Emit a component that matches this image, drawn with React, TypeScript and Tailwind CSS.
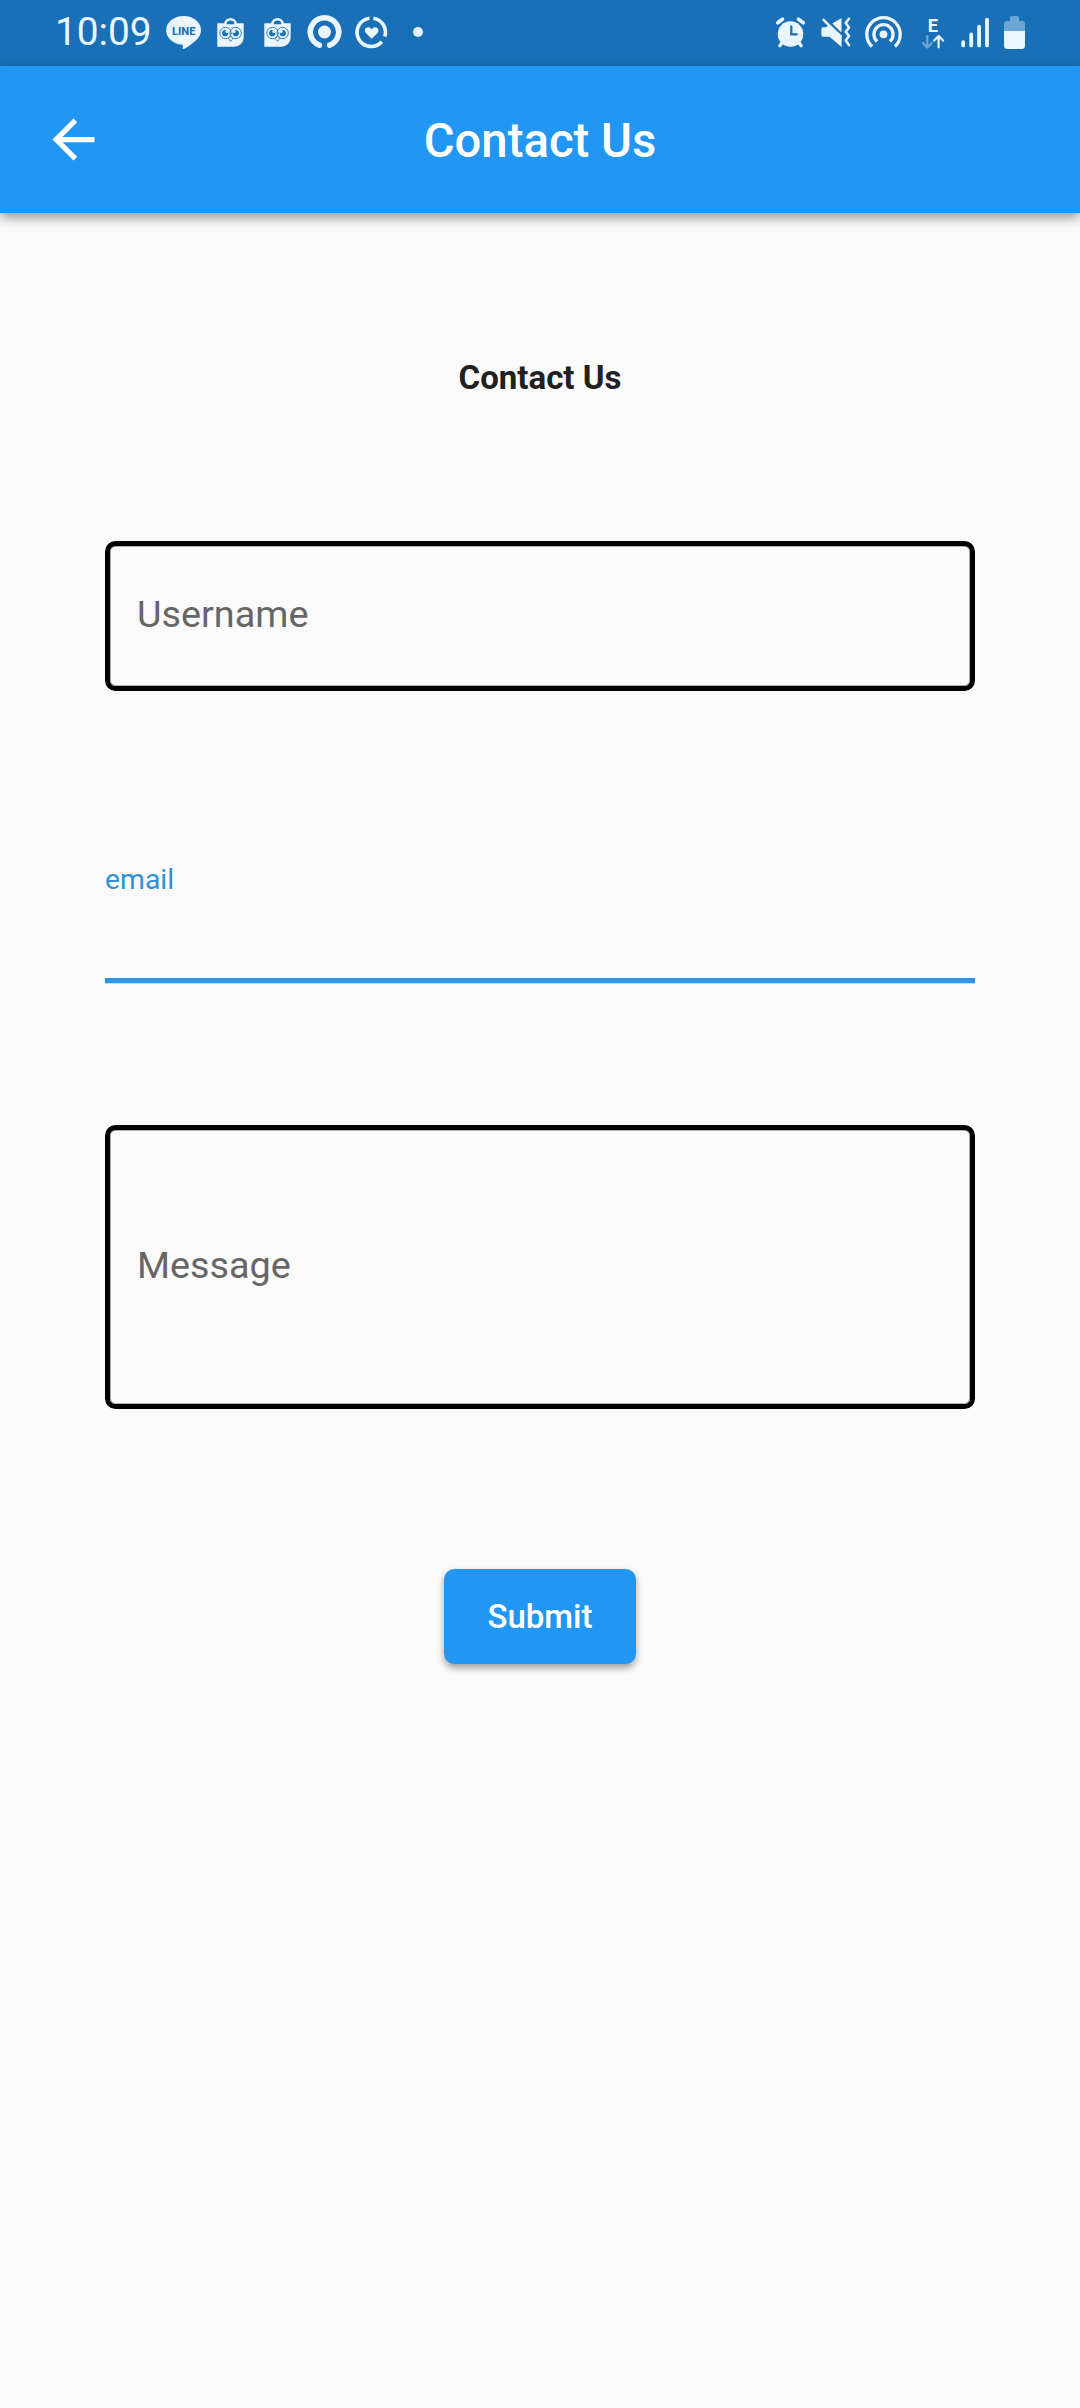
import React from 'react';

const INK = '#eaf5ff';
const BAR = '#1a70b7';

/* Every status glyph is drawn in status-bar units: x is its offset along the bar. */
function Glyph({ x, w, className, children }: { x: number; w: number; className?: string; children: React.ReactNode }) {
  return (
    <svg
      className={className ? 'block shrink-0 ' + className : 'block shrink-0'}
      width={w}
      height={66}
      viewBox={`${x} 0 ${w} 66`}
      fill={INK}
    >
      {children}
    </svg>
  );
}

function OwlBag() {
  return (
    <>
      <path d="M217.3 23.300h26.400v13.900a9.500 9.500 0 0 1-9.500 9.500h-16.900z" />
      <path d="M226.600 24.200a3.900 3.900 0 0 1 7.800 0z" fill={BAR} />
      <path d="M225.300 24a5.200 4.700 0 0 1 10.400 0" fill="none" stroke={INK} strokeWidth="2.500" />
      <g fill="none" stroke={BAR} strokeWidth="0.900">
        <circle cx="225.500" cy="33" r="5.700" />
        <circle cx="235.600" cy="33" r="5.700" />
      </g>
      <circle cx="225.200" cy="33.200" r="3.100" fill={BAR} />
      <circle cx="235.800" cy="33.200" r="3.100" fill={BAR} />
      <circle cx="226.800" cy="31.600" r="1.500" />
      <circle cx="234.200" cy="31.600" r="1.500" />
      <path d="M228.200 38.300l2.400-1.700 2.400 1.700-2.400 3.200z" stroke={BAR} strokeWidth=".8" />
    </>
  );
}

function StatusBar() {
  return (
    <div className="flex h-[66px] items-start bg-[#1a70b7] pl-[55px]">
      <div className="w-[111px] pt-[10px] text-[38.8px] leading-[44px] whitespace-nowrap text-[#eaf5ff]">10:09</div>
      <Glyph x={166} w={36}>
        <path d="M183.600 16c9.800 0 17.400 6.200 17.400 14.200 0 5.200-3.300 8.800-7.600 12.300-3.500 2.900-8 6-9.900 6.500-.9.200-.9-.3-.8-1l.3-2.300c0-.7-.2-.9-.9-1-9.200-.9-15.900-6.800-15.900-14.500C166.200 22.200 173.800 16 183.600 16z" />
        <text x="172" y="34.700" fill={BAR} fontFamily="Roboto, sans-serif" fontWeight="800" fontSize="10.300" textLength="23.500" lengthAdjust="spacingAndGlyphs">LINE</text>
      </Glyph>
      <Glyph x={216} w={30} className="ml-[14px]"><OwlBag /></Glyph>
      <Glyph x={216} w={30} className="ml-[17px]"><OwlBag /></Glyph>
      <Glyph x={306} w={37} className="ml-[13px]">
        <circle cx="324.500" cy="32" r="6.500" />
        <path d="M319.300 45.200a14.200 14.200 0 1 1 10.400 0" fill="none" stroke={INK} strokeWidth="5.600" strokeLinecap="round" />
      </Glyph>
      <Glyph x={354} w={35} className="ml-[11px]">
        <path d="M369.500 18.200a14.200 14.200 0 1 0 12.300 23.600" fill="none" stroke={INK} strokeWidth="3.600" />
        <path d="M373.400 18.200a14.200 14.200 0 0 1 11.400 18.300" fill="none" stroke={INK} strokeWidth="3.600" />
        <path d="M371.700 38.700l-5.600-5.500c-3-3.200.1-7.200 3.500-5.600.9.400 1.600 1.100 2.100 1.900.5-.8 1.200-1.500 2.100-1.900 3.400-1.600 6.500 2.400 3.500 5.600z" />
      </Glyph>
      <Glyph x={410} w={16} className="ml-[21px]"><circle cx="418" cy="32" r="5" /></Glyph>
      <Glyph x={774} w={33} className="ml-[348px]">
        <circle cx="790.500" cy="34" r="12.800" />
        <path d="M777.700 22.800l4.800-3.600M803.300 22.800l-4.800-3.600" stroke={INK} strokeWidth="3.600" strokeLinecap="round" />
        <path d="M782.500 42l-2.700 3.800M798.500 42l2.700 3.800" stroke={INK} strokeWidth="3.200" strokeLinecap="round" />
        <path d="M791.300 26.500v7.800h5.500" fill="none" stroke={BAR} strokeWidth="2.300" strokeLinecap="round" />
      </Glyph>
      <Glyph x={819} w={33} className="ml-[12px]">
        <path d="M823.500 27.300h5L841.500 38v9L829.500 36.800h-6a2.200 2.200 0 0 1-2.200-2.200v-5.100a2.200 2.200 0 0 1 2.200-2.200z" />
        <path d="M823.500 19.800L840.500 36.500" stroke={INK} strokeWidth="2.500" strokeLinecap="round" />
        <path d="M826 27L841.500 42v-6.500L830 25z" />
        <path d="M841.500 18v14.500l-9.200-9z" />
        <path d="M849 18.800l-3.300 4.300 3.300 4.300-3.300 4.300 3.300 4.300-3.300 4.300 3.300 4.800" fill="none" stroke={INK} strokeWidth="2.500" strokeLinecap="round" strokeLinejoin="round" />
      </Glyph>
      <Glyph x={864} w={40} className="ml-[12px]">
        <circle cx="883.500" cy="34.300" r="3.900" />
        <g fill="none" stroke={INK} strokeWidth="3.300">
          <path d="M877.100 41.400a9.600 9.600 0 1 1 12.800 0" />
          <path d="M872.100 46.500a16.700 16.700 0 1 1 22.800 0" />
        </g>
      </Glyph>
      <Glyph x={920} w={26} className="ml-[16px]">
        <text x="927.800" y="31.500" fontFamily="Roboto, sans-serif" fontWeight="700" fontSize="18.300">E</text>
        <g fill="none" stroke={INK} strokeWidth="2.200" strokeLinecap="round" strokeLinejoin="round">
          <path d="M927.300 36v11.300m-4.400-4.400l4.400 4.600 4.400-4.600" opacity=".4" />
          <path d="M938.600 47.300V36m-4.500 4.600l4.500-4.700 4.500 4.700" />
        </g>
      </Glyph>
      <Glyph x={960} w={30} className="ml-[14px]">
        <g stroke={INK} strokeWidth="3.800" strokeLinecap="round">
          <path d="M963.200 42.200v3.200M971.200 34.500v10.900M979.100 26.700v18.700M987 19.600v25.800" />
        </g>
      </Glyph>
      <Glyph x={1002} w={26} className="ml-[12px]">
        <path d="M1004 31v-7a3 3 0 0 1 3-3h3v-3a2 2 0 0 1 2-2h5a2 2 0 0 1 2 2v3h3a3 3 0 0 1 3 3v7z" opacity=".4" />
        <path d="M1004 31h21v14.500a3.500 3.500 0 0 1-3.500 3.500h-14a3.500 3.500 0 0 1-3.500-3.500z" />
      </Glyph>
    </div>
  );
}

function AppBar() {
  return (
    <header className="grid h-[147px] grid-cols-[147px_1fr_147px] items-center bg-[#2196f3] shadow-[0_5px_11px_rgba(0,0,0,0.38)]">
      <button className="ml-[42px] size-[63px]" aria-label="Back">
        <svg viewBox="0 0 24 24" className="size-[63px]" fill="#fff">
          <path d="M20 11H7.830l5.590-5.590L12 4l-8 8 8 8 1.410-1.410L7.830 13H20v-2z" />
        </svg>
      </button>
      <h1 className="pt-[2px] text-center text-[47.25px] leading-[56px] font-medium text-white">Contact Us</h1>
    </header>
  );
}

export default function App() {
  return (
    <div className="h-[2408px] w-[1080px] bg-[#fafafa] font-['Roboto',sans-serif]">
      <StatusBar />
      <AppBar />
      <main className="flex flex-col px-[105px] pt-[145px]">
        <h2 className="text-center text-[33px] leading-[40px] font-bold text-[#212121]">Contact Us</h2>
        <div className="mt-[143px] flex h-[150px] items-center rounded-[10.5px] border-5 border-black px-[27px] text-[37.8px] leading-[44px] text-[#666666] shadow-[inset_0_0_0_1px_rgba(0,0,0,0.3)]">
          <span className="-mt-[4px]">Username</span>
        </div>
        <div className="mt-[172px] flex h-[120px] flex-col border-b-5 border-[#2f95e8] text-[28.35px] leading-[34px] text-[#3190d9] shadow-[0_1px_0_#bfdcf5]">
          <span>email</span>
        </div>
        <div className="mt-[142px] flex h-[284px] items-center rounded-[10.5px] border-5 border-black px-[27px] text-[37.8px] leading-[44px] text-[#666666] shadow-[inset_0_0_0_1px_rgba(0,0,0,0.3)]">
          <span className="-mt-[4px]">Message</span>
        </div>
        <button className="mt-[160px] flex h-[94.5px] w-[192px] items-center justify-center self-center rounded-[10.5px] bg-[#2196f3] pt-[2px] text-[33px] leading-[40px] font-medium text-white shadow-[0_4px_7px_rgba(0,0,0,0.36)]">
          Submit
        </button>
      </main>
    </div>
  );
}
